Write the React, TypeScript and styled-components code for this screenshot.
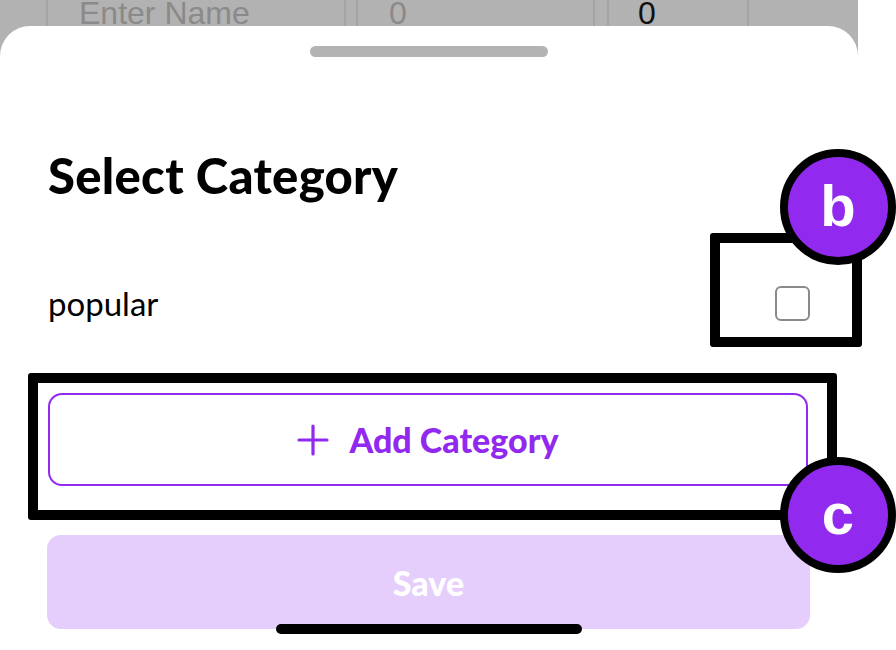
import React from 'react';
import styled, {createGlobalStyle} from 'styled-components';

const purple = '#9129ef';

const GlobalStyle = createGlobalStyle`
	* {
		box-sizing: border-box;
	}
	body {
		margin: 0;
		background: #ffffff;
		font-family: Lato, "Open Sans", sans-serif;
	}
`;

const Screen = styled.div`
	position: relative;
	display: flex;
	width: 896px;
	height: 650px;
	overflow: hidden;
	background: #ffffff;
`;

const Phone = styled.div`
	display: flex;
	flex-direction: column;
	width: 858px;
	background: #b2b2b2;
`;

const BackdropRow = styled.div`
	display: flex;
	height: 26px;
	overflow: hidden;
	font-family: "Liberation Sans", Arial, sans-serif;
	font-size: 32px;
	line-height: 26px;
`;

const Cell = styled.div<{ $w: number; $dark?: boolean; $pad?: number }>`
	width: ${({$w}) => $w}px;
	flex-shrink: 0;
	padding-left: ${({$pad}) => $pad ?? 0}px;
	border-right: 2px solid #a4a4a4;
	color: ${({$dark}) => ($dark ? '#111111' : '#8a8a8a')};
`;

const Sheet = styled.div`
	flex: 1;
	display: flex;
	flex-direction: column;
	background: #ffffff;
	border-radius: 30px 30px 0 0;
	padding: 0 48px;
`;

const Handle = styled.div`
	align-self: center;
	width: 238px;
	height: 11px;
	margin-top: 20px;
	border-radius: 6px;
	background: #b3b3b3;
`;

const Title = styled.h2`
	margin: 92px 0 0;
	font-size: 49px;
	font-weight: 900;
	line-height: 52px;
	color: #000000;
	letter-spacing: 0.3px;
`;

const OptionRow = styled.div`
	display: flex;
	align-items: center;
	justify-content: space-between;
	margin-top: 84px;
	height: 36px;
`;

const OptionLabel = styled.span`
	font-size: 33px;
	color: #000000;
`;

const Checkbox = styled.div`
	width: 35px;
	height: 35px;
	border: 2.5px solid #8a8a8a;
	border-radius: 6px;
`;

const OutlineButton = styled.button`
	display: flex;
	align-items: center;
	justify-content: center;
	gap: 20px;
	width: 760px;
	height: 93px;
	margin-top: 72px;
	border: 2px solid ${purple};
	border-radius: 14px;
	background: #ffffff;
	color: ${purple};
	font-family: Lato, "Open Sans", sans-serif;
	font-size: 34px;
	font-weight: 900;
`;

const SaveButton = styled.button`
	width: 763px;
	height: 94px;
	margin-top: 49px;
	margin-left: -1px;
	border: none;
	border-radius: 14px;
	background: #e5cefc;
	color: #ffffff;
	font-family: Lato, "Open Sans", sans-serif;
	font-size: 34px;
	font-weight: 900;
`;

const HomeIndicator = styled.div`
	position: absolute;
	left: 276px;
	top: 624px;
	width: 306px;
	height: 10px;
	border-radius: 5px;
	background: #000000;
`;

const Frame = styled.div<{ $x: number; $y: number; $w: number; $h: number }>`
	position: absolute;
	left: ${({$x}) => $x}px;
	top: ${({$y}) => $y}px;
	width: ${({$w}) => $w}px;
	height: ${({$h}) => $h}px;
	border: 10px solid #000000;
	border-radius: 3px;
`;

const Badge = styled.div<{ $x: number; $y: number }>`
	position: absolute;
	left: ${({$x}) => $x}px;
	top: ${({$y}) => $y}px;
	width: 116px;
	height: 116px;
	display: flex;
	align-items: center;
	justify-content: center;
	border: 8px solid #000000;
	border-radius: 50%;
	background: ${purple};
	color: #ffffff;
	font-family: "Liberation Sans", Arial, sans-serif;
	font-weight: 700;
	font-size: 58px;
	padding-bottom: 4px;
`;

const PlusIcon = () => (
	<svg width="32" height="32" viewBox="0 0 32 32" fill="none">
		<path d="M16 2v28M2 16h28" stroke={purple} strokeWidth="3.2" strokeLinecap="round" />
	</svg>
);

const App = () => {
	return (
		<Screen>
			<GlobalStyle />
			<Phone>
				<BackdropRow>
					<Cell $w={48} />
					<Cell $w={298} $pad={31}>Enter Name</Cell>
					<Cell $w={12} />
					<Cell $w={237} $pad={31}>0</Cell>
					<Cell $w={14} />
					<Cell $w={140} $pad={29} $dark>0</Cell>
				</BackdropRow>
				<Sheet>
					<Handle />
					<Title>Select Category</Title>
					<OptionRow>
						<OptionLabel>popular</OptionLabel>
						<Checkbox />
					</OptionRow>
					<OutlineButton>
						<PlusIcon />
						Add Category
					</OutlineButton>
					<SaveButton>Save</SaveButton>
				</Sheet>
			</Phone>
			<HomeIndicator />
			<Frame $x={710} $y={233} $w={152} $h={114} />
			<Badge $x={780} $y={149}>b</Badge>
			<Frame $x={28} $y={373} $w={809} $h={147} />
			<Badge $x={780} $y={457}>c</Badge>
		</Screen>
	);
};

export default App;
